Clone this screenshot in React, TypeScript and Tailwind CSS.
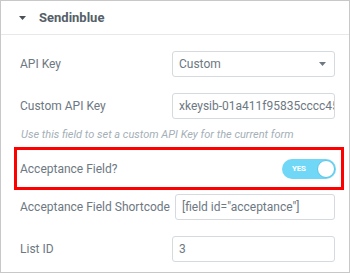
import React from "react";

function Row({ label, children, className = "" }: { label: string; children: React.ReactNode; className?: string }) {
  return (
    <div className={`flex items-center justify-between ${className}`}>
      <span className="text-[12px] text-[#6d7882] whitespace-nowrap">{label}</span>
      {children}
    </div>
  );
}

export default function App() {
  return (
    <div className="w-[350px] h-[273px] bg-white border border-[#c8c8c8] font-['Roboto',sans-serif] flex flex-col overflow-hidden">
      <div className="h-[34px] border-b border-[#e6e9ec] flex items-center pl-[18px] shrink-0">
        <svg width="7" height="4" viewBox="0 0 7 4" className="mr-[13px]">
          <path d="M0 0 L7 0 L3.5 4 Z" fill="#495157" />
        </svg>
        <span className="text-[13px] font-bold text-[#556068]">Sendinblue</span>
      </div>
      <div className="flex flex-col pl-[19px] pr-[14px] pt-[16px]">
        <Row label="API Key" className="h-[26px]">
          <div className="w-[163px] h-[26px] border border-[#d5dadf] rounded-[3px] flex items-center justify-between pl-[6px] pr-[8px]">
            <span className="text-[12px] text-[#6d7882]">Custom</span>
            <svg width="7" height="4" viewBox="0 0 7 4">
              <path d="M0 0 L7 0 L3.5 4 Z" fill="#6d7882" />
            </svg>
          </div>
        </Row>
        <Row label="Custom API Key" className="h-[26px] mt-[16px]">
          <div className="w-[163px] h-[26px] border border-[#d5dadf] rounded-[3px] flex items-center pl-[6px] overflow-hidden">
            <span className="text-[12px] text-[#6d7882] whitespace-nowrap">xkeysib-01a411f95835cccc45e0</span>
          </div>
        </Row>
        <div className="mt-[9px] h-[14px] leading-[14px] text-[11px] italic text-[#a4afb7] whitespace-nowrap pl-[1px]">
          Use this field to set a custom API Key for the current form
        </div>
        <div className="relative mt-[5px] h-[43px] flex items-center justify-between">
          <span className="text-[12px] text-[#6d7882] whitespace-nowrap">Acceptance Field?</span>
          <div className="relative w-[54px] h-[20px] rounded-full bg-[#71d7f7] mr-[-1px] mt-[1px] flex items-center">
            <span className="text-[8px] font-bold text-white ml-[10px] tracking-[-0.2px]">YES</span>
            <div className="absolute right-[1px] top-[1px] w-[18px] h-[18px] rounded-full bg-white border border-[#5bc4e6]" />
          </div>
          <div className="absolute top-0 bottom-0 left-[-6px] right-[-9px] border-[3px] border-[#ff0000] pointer-events-none" />
        </div>
        <Row label="Acceptance Field Shortcode" className="h-[26px] mt-[4px]">
          <div className="w-[160px] h-[26px] border border-[#d5dadf] rounded-[3px] flex items-center pl-[6px] overflow-hidden">
            <span className="text-[12px] text-[#6d7882] whitespace-nowrap">[field id="acceptance"]</span>
          </div>
        </Row>
        <Row label="List ID" className="h-[26px] mt-[16px]">
          <div className="w-[163px] h-[26px] border border-[#d5dadf] rounded-[3px] flex items-center pl-[6px]">
            <span className="text-[12px] text-[#6d7882]">3</span>
          </div>
        </Row>
      </div>
    </div>
  );
}
